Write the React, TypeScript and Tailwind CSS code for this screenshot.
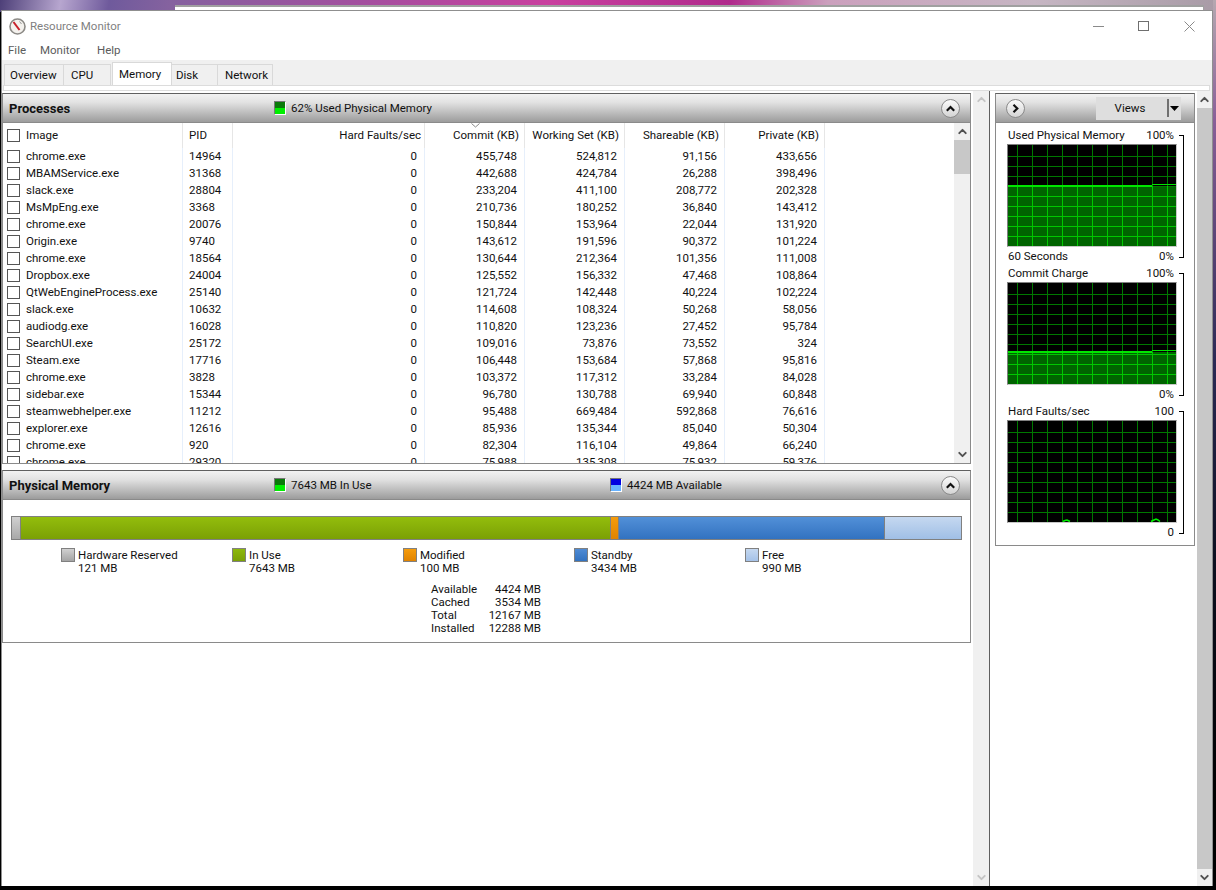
import { ChevronDown, ChevronUp } from "lucide-react";

const processes = [
    ["chrome.exe", "14964", "0", "455,748", "524,812", "91,156", "433,656"],
    ["MBAMService.exe", "31368", "0", "442,688", "424,784", "26,288", "398,496"],
    ["slack.exe", "28804", "0", "233,204", "411,100", "208,772", "202,328"],
    ["MsMpEng.exe", "3368", "0", "210,736", "180,252", "36,840", "143,412"],
    ["chrome.exe", "20076", "0", "150,844", "153,964", "22,044", "131,920"],
    ["Origin.exe", "9740", "0", "143,612", "191,596", "90,372", "101,224"],
    ["chrome.exe", "18564", "0", "130,644", "212,364", "101,356", "111,008"],
    ["Dropbox.exe", "24004", "0", "125,552", "156,332", "47,468", "108,864"],
    ["QtWebEngineProcess.exe", "25140", "0", "121,724", "142,448", "40,224", "102,224"],
    ["slack.exe", "10632", "0", "114,608", "108,324", "50,268", "58,056"],
    ["audiodg.exe", "16028", "0", "110,820", "123,236", "27,452", "95,784"],
    ["SearchUI.exe", "25172", "0", "109,016", "73,876", "73,552", "324"],
    ["Steam.exe", "17716", "0", "106,448", "153,684", "57,868", "95,816"],
    ["chrome.exe", "3828", "0", "103,372", "117,312", "33,284", "84,028"],
    ["sidebar.exe", "15344", "0", "96,780", "130,788", "69,940", "60,848"],
    ["steamwebhelper.exe", "11212", "0", "95,488", "669,484", "592,868", "76,616"],
    ["explorer.exe", "12616", "0", "85,936", "135,344", "85,040", "50,304"],
    ["chrome.exe", "920", "0", "82,304", "116,104", "49,864", "66,240"],
    ["chrome.exe", "29320", "0", "75,988", "135,308", "75,932", "59,376"],
];

const legend = [
    { label: "Hardware Reserved", value: "121 MB", swatch: "bg-[linear-gradient(#d0d0d0,#a4a4a4)]" },
    { label: "In Use", value: "7643 MB", swatch: "bg-[linear-gradient(#8db80c,#7ba005)]" },
    { label: "Modified", value: "100 MB", swatch: "bg-[linear-gradient(#f59c0c,#e08300)]" },
    { label: "Standby", value: "3434 MB", swatch: "bg-[linear-gradient(#4f8bd4,#3272c0)]" },
    { label: "Free", value: "990 MB", swatch: "bg-[linear-gradient(#c5d8f0,#a5c2e8)]" },
];

const stats = [
    ["Available", "4424 MB"],
    ["Cached", "3534 MB"],
    ["Total", "12167 MB"],
    ["Installed", "12288 MB"],
];

const headerBg = "bg-[linear-gradient(#f2f2f2,#e2e2e2_30%,#9c9c9c)]";
const rowGrid = "grid grid-cols-[180px_50px_192px_100px_100px_100px_100px]";
const tabClass = "h-[21px] border border-b-0 border-[#d9d9d9] flex items-center";

function CircleButton({ right }: { right?: boolean }) {
    return (
        <div className="w-[19px] h-[19px] rounded-full border border-[#8a8a8a] bg-[linear-gradient(#fbfbfb,#d4d4d4)] flex items-center justify-center shrink-0">
            <svg width="11" height="9" viewBox="0 0 11 9" fill="none" stroke="#111" strokeWidth="2.2">
                {right ? <path d="M3.5 0.8 L7.3 4.5 L3.5 8.2" /> : <path d="M1.8 6.8 L5.5 3 L9.2 6.8" />}
            </svg>
        </div>
    );
}

function MeterIcon({ blue }: { blue?: boolean }) {
    return (
        <div className="w-[12px] h-[14px] border border-[#777] border-b-white border-r-white flex flex-col shrink-0">
            <div className={`h-[6px] ${blue ? "bg-[#0000e0]" : "bg-[#0a7a0a]"}`} />
            <div className={`flex-1 ${blue ? "bg-[#66b2ff]" : "bg-[#00ee00]"}`} />
        </div>
    );
}

function ScrollBar({ thumbClass, muted, narrow }: { thumbClass?: string; muted?: boolean; narrow?: boolean }) {
    const arrow = muted ? "text-[#c4c4c4]" : "text-[#505050]";
    return (
        <div className={`${narrow ? "w-[15px]" : "w-[16px]"} h-full bg-[#f0f0f0] flex flex-col items-center shrink-0`}>
            <div className="h-[17px] flex items-center justify-center shrink-0">
                <ChevronUp className={`w-[13px] h-[13px] ${arrow}`} strokeWidth={3.5} />
            </div>
            <div className="flex-1 w-full">
                {thumbClass && <div className={thumbClass} />}
            </div>
            <div className="h-[17px] flex items-center justify-center shrink-0">
                <ChevronDown className={`w-[13px] h-[13px] ${arrow}`} strokeWidth={3.5} />
            </div>
        </div>
    );
}

function GraphSvg({ level, step, bumps }: { level?: number; step?: number; bumps?: boolean }) {
    const vertical = Array.from({ length: 11 }, (_, i) => 9 + i * 15);
    const horizontal = Array.from({ length: 9 }, (_, i) => 11 + i * 10);
    const filled = level !== undefined;
    return (
        <svg width="168" height="101" viewBox="0 0 168 101" className="block" shapeRendering="crispEdges">
            <rect width="168" height="101" fill="#000" />
            {filled && <rect x="0" y={level} width="168" height={101 - level} fill="#006400" />}
            {horizontal.map((y) => (
                <rect key={y} x="0" y={y} width="168" height="1" fill={filled && y > level ? "#00c800" : "#007800"} />
            ))}
            {vertical.map((x) => (
                <g key={x}>
                    <rect x={x} y="0" width="1" height={level ?? 101} fill="#007800" />
                    {filled && <rect x={x} y={level} width="1" height={101 - level} fill="#00c800" />}
                </g>
            ))}
            {filled && <rect x="0" y={level - 1} width={step ?? 168} height="2" fill="#00e600" />}
            {filled && step !== undefined && <rect x={step} y={level - 2} width={168 - step} height="1" fill="#00e600" />}
            {bumps && (
                <g fill="none" stroke="#00f000" strokeWidth="1.5" shapeRendering="auto">
                    <path d="M55 100.5 L57 99.5 L59 99 L61 100 L62 100.5" />
                    <path d="M143 100.5 L146 99 L148 98 L150 99 L152 100.5" />
                </g>
            )}
        </svg>
    );
}

function Chart({ title, top, left, bottom, level, step, bumps }: { title: string; top: string; left?: string; bottom: string; level?: number; step?: number; bumps?: boolean }) {
    return (
        <div className="relative h-[138px] shrink-0 pl-[11px] w-[198px]">
            <div className="flex justify-between h-[17px] items-center w-[167px] pl-px text-[#111]">
                <span>{title}</span>
                <span>{top}</span>
            </div>
            <div className="w-[170px] h-[103px] border border-t-[#808080] border-l-[#808080] border-r-[#c8c8c8] border-b-[#c8c8c8] overflow-hidden">
                <GraphSvg level={level} step={step} bumps={bumps} />
            </div>
            <div className="flex justify-between h-[18px] items-center w-[167px] pl-px text-[#111]">
                <span>{left}</span>
                <span>{bottom}</span>
            </div>
            <div className="absolute left-[183px] top-[8px] w-[5px] h-[123px] border-t border-r border-b border-black" />
        </div>
    );
}

export default function App() {
    return (
        <div className="relative w-[1216px] h-[890px] overflow-hidden bg-black pt-[10px] pl-[1px] pr-[3px] pb-[4px] font-['Roboto',sans-serif] text-[11.5px] leading-[17px] text-[#111]">
            <div className="absolute left-0 top-0 w-full h-[12px] bg-[linear-gradient(100deg,#4d3f78,#b7a6cf_5%,#6f5a9c_9%,#85629f_14%,#a44f9f_30%,#c9409f_45%,#b02a8c_60%,#cba0bd_68%,#c6b6c3_85%,#a89ba6)]" />
            <div className="absolute right-0 top-0 w-[3px] h-[800px] bg-[linear-gradient(#b5a8b0,#8a5f98_15%,#2c2a55_45%,#0d1020_70%,#000)]" />
            <div className="absolute left-[175px] top-[5px] w-[1029px] h-[8px] bg-white border-t-2 border-r border-[#a0a0a0]" />

            <div className="relative h-full flex flex-col bg-white border-t border-l border-r border-[#8f8f8f]">
                {/* title bar */}
                <div className="h-[32px] flex items-center shrink-0 pl-[7px] pb-[2px]">
                    <svg width="17" height="17" viewBox="0 0 17 17" className="shrink-0">
                        <circle cx="8.5" cy="8.5" r="7.5" fill="#f4f2ee" stroke="#8c8a86" strokeWidth="1.6" />
                        <path d="M4.5 4 L10.5 12" stroke="#c8202a" strokeWidth="2" />
                        <path d="M10.5 3.5 L12.5 6" stroke="#999" strokeWidth="1" />
                    </svg>
                    <span className="ml-[4px] text-[#7f7f7f]">Resource Monitor</span>
                    <div className="ml-auto flex items-center">
                        <div className="w-[11px] h-px bg-[#8a8a8a] mr-[34px]" />
                        <div className="w-[11px] h-[10px] border border-[#6f6f6f] mr-[35px]" />
                        <svg width="11" height="11" viewBox="0 0 11 11" className="mr-[17px]" stroke="#8a8a8a" fill="none">
                            <path d="M0.5 0.5 L10.5 10.5 M10.5 0.5 L0.5 10.5" />
                        </svg>
                    </div>
                </div>

                {/* menu */}
                <div className="h-[17px] flex items-center pl-[6px] pb-[2px] text-[#5c5c5c] shrink-0">
                    <span className="w-[32px]">File</span>
                    <span className="w-[57px]">Monitor</span>
                    <span>Help</span>
                </div>

                {/* tabs */}
                <div className="h-[31px] bg-[#f0f0f0] shrink-0 flex flex-col">
                    <div className="flex items-end h-[25px] pl-[2px] shrink-0">
                        <div className={`w-[60px] pl-[5px] ${tabClass}`}>Overview</div>
                        <div className={`w-[47px] pl-[7px] border-l-0 ${tabClass}`}>CPU</div>
                        <div className="w-[60px] ml-px h-[23px] bg-white border border-b-0 border-[#d9d9d9] flex items-center pl-[6px]">Memory</div>
                        <div className={`w-[46px] pl-[4px] border-l-0 ${tabClass}`}>Disk</div>
                        <div className={`w-[55px] pl-[7px] border-l-0 ${tabClass}`}>Network</div>
                    </div>
                    <div className="h-[6px] ml-px mr-[2px] bg-white border border-[#dcdcdc]" />
                </div>

                {/* content */}
                <div className="flex-1 flex min-h-0">
                    <div className="w-[971px] shrink-0 pr-[2px] pt-[2px] flex flex-col gap-[6px]">
                        <section className="h-[371px] border border-[#8a8a8a] border-t-[#606060] flex flex-col overflow-hidden">
                            <div className={`h-[29px] ${headerBg} border-b border-[#8a8a8a] flex items-center shrink-0 pl-[6px] pr-[10px]`}>
                                <span className="font-bold text-[13px] w-[265px]">Processes</span>
                                <MeterIcon />
                                <span className="ml-[5px]">62% Used Physical Memory</span>
                                <div className="ml-auto"><CircleButton /></div>
                            </div>
                            <div className="flex-1 flex min-h-0">
                                <div className="flex-1 overflow-hidden">
                                    <div className={`${rowGrid} h-[25px] relative`}>
                                        <div className="border-r border-[#e6e6e6] flex items-center pl-[4px]">
                                            <span className="w-[13px] h-[13px] border border-[#555] mr-[6px]" />
                                            Image
                                        </div>
                                        <div className="border-r border-[#e6e6e6] flex items-center pl-[6px]">PID</div>
                                        {["Hard Faults/sec", "Commit (KB)", "Working Set (KB)", "Shareable (KB)", "Private (KB)"].map((h, i) => (
                                            <div key={h} className={`border-r border-[#e6e6e6] flex items-center justify-end ${i === 0 ? "pr-[3px]" : "pr-[5px]"}`}>{h}</div>
                                        ))}
                                        <svg width="9" height="5" viewBox="0 0 9 5" className="absolute left-[468px] top-0" fill="none" stroke="#888">
                                            <path d="M0.5 0.5 L4.5 4 L8.5 0.5" />
                                        </svg>
                                    </div>
                                    {processes.map((p, i) => (
                                        <div key={i} className={`${rowGrid} h-[17px]`}>
                                            <div className="border-r border-[#e6effb] flex items-center pl-[4px]">
                                                <span className="w-[13px] h-[13px] border border-[#555] mr-[6px]" />
                                                {p[0]}
                                            </div>
                                            <div className="border-r border-[#e6effb] flex items-center pl-[6px]">{p[1]}</div>
                                            {p.slice(2).map((v, j) => (
                                                <div key={j} className="border-r border-[#e6effb] flex items-center justify-end pr-[7px]">{v}</div>
                                            ))}
                                        </div>
                                    ))}
                                </div>
                                <ScrollBar thumbClass="h-[34px] bg-[#c8c8c8]" />
                            </div>
                        </section>

                        <section className="h-[173px] border border-[#8a8a8a] border-t-[#606060] flex flex-col">
                            <div className={`h-[29px] ${headerBg} border-b border-[#8a8a8a] flex items-center shrink-0 pl-[6px] pr-[10px]`}>
                                <span className="font-bold text-[13px] w-[265px]">Physical Memory</span>
                                <MeterIcon />
                                <span className="ml-[5px] w-[319px]">7643 MB In Use</span>
                                <MeterIcon blue />
                                <span className="ml-[5px]">4424 MB Available</span>
                                <div className="ml-auto"><CircleButton /></div>
                            </div>
                            <div className="pt-[16px] pl-[8px]">
                                <div className="w-[951px] h-[24px] border border-[#808080] flex">
                                    <div className="w-[9px] bg-[linear-gradient(#d0d0d0,#a8a8a8)] border-r border-[#808080]" />
                                    <div className="w-[590px] bg-[linear-gradient(#93bd0c,#7ba005)] border-r border-[#808080]" />
                                    <div className="w-[8px] bg-[linear-gradient(#f59c0c,#e08300)] border-r border-[#808080]" />
                                    <div className="w-[266px] bg-[linear-gradient(#5290d8,#3272c0)] border-r border-[#808080]" />
                                    <div className="flex-1 bg-[linear-gradient(#c5d8f0,#a0bfe6)]" />
                                </div>
                                <div className="flex pl-[50px] mt-[8px]">
                                    {legend.map((l) => (
                                        <div key={l.label} className="w-[171px] flex gap-[3px] leading-[13px]">
                                            <div className={`w-[14px] h-[14px] border border-[#808080] shrink-0 ${l.swatch}`} />
                                            <div className="pt-px">
                                                <div>{l.label}</div>
                                                <div>{l.value}</div>
                                            </div>
                                        </div>
                                    ))}
                                </div>
                                <div className="ml-[420px] mt-[8px] w-[110px] leading-[13px]">
                                    {stats.map(([k, v]) => (
                                        <div key={k} className="flex justify-between">
                                            <span>{k}</span>
                                            <span>{v}</span>
                                        </div>
                                    ))}
                                </div>
                            </div>
                        </section>
                    </div>

                    <ScrollBar muted />

                    <div className="flex-1 border-l border-[#5f5f5f] pl-[5px] pt-[2px] min-w-0">
                        <section className="w-[200px] h-[453px] border border-[#8a8a8a] border-t-[#606060] flex flex-col">
                            <div className={`h-[29px] ${headerBg} border-b border-[#8a8a8a] flex items-center shrink-0 pl-[10px]`}>
                                <CircleButton right />
                                <div className="ml-[71px] w-[85px] h-[23px] bg-[#dedede] flex items-center">
                                    <span className="w-[68px] mr-[3px] text-center">Views</span>
                                    <div className="w-[2px] h-[18px] bg-[#707070]" />
                                    <svg width="9" height="5" viewBox="0 0 9 5" className="ml-px"><path d="M0 0 H9 L4.5 5 Z" fill="#000" /></svg>
                                </div>
                            </div>
                            <div className="pt-[4px]">
                                <Chart title="Used Physical Memory" top="100%" left="60 Seconds" bottom="0%" level={41} step={144} />
                                <Chart title="Commit Charge" top="100%" bottom="0%" level={69} step={144} />
                                <Chart title="Hard Faults/sec" top="100" bottom="0" bumps />
                            </div>
                        </section>
                    </div>

                    <ScrollBar narrow thumbClass="h-full bg-[#c8c8c8]" />
                </div>
            </div>
        </div>
    );
}
